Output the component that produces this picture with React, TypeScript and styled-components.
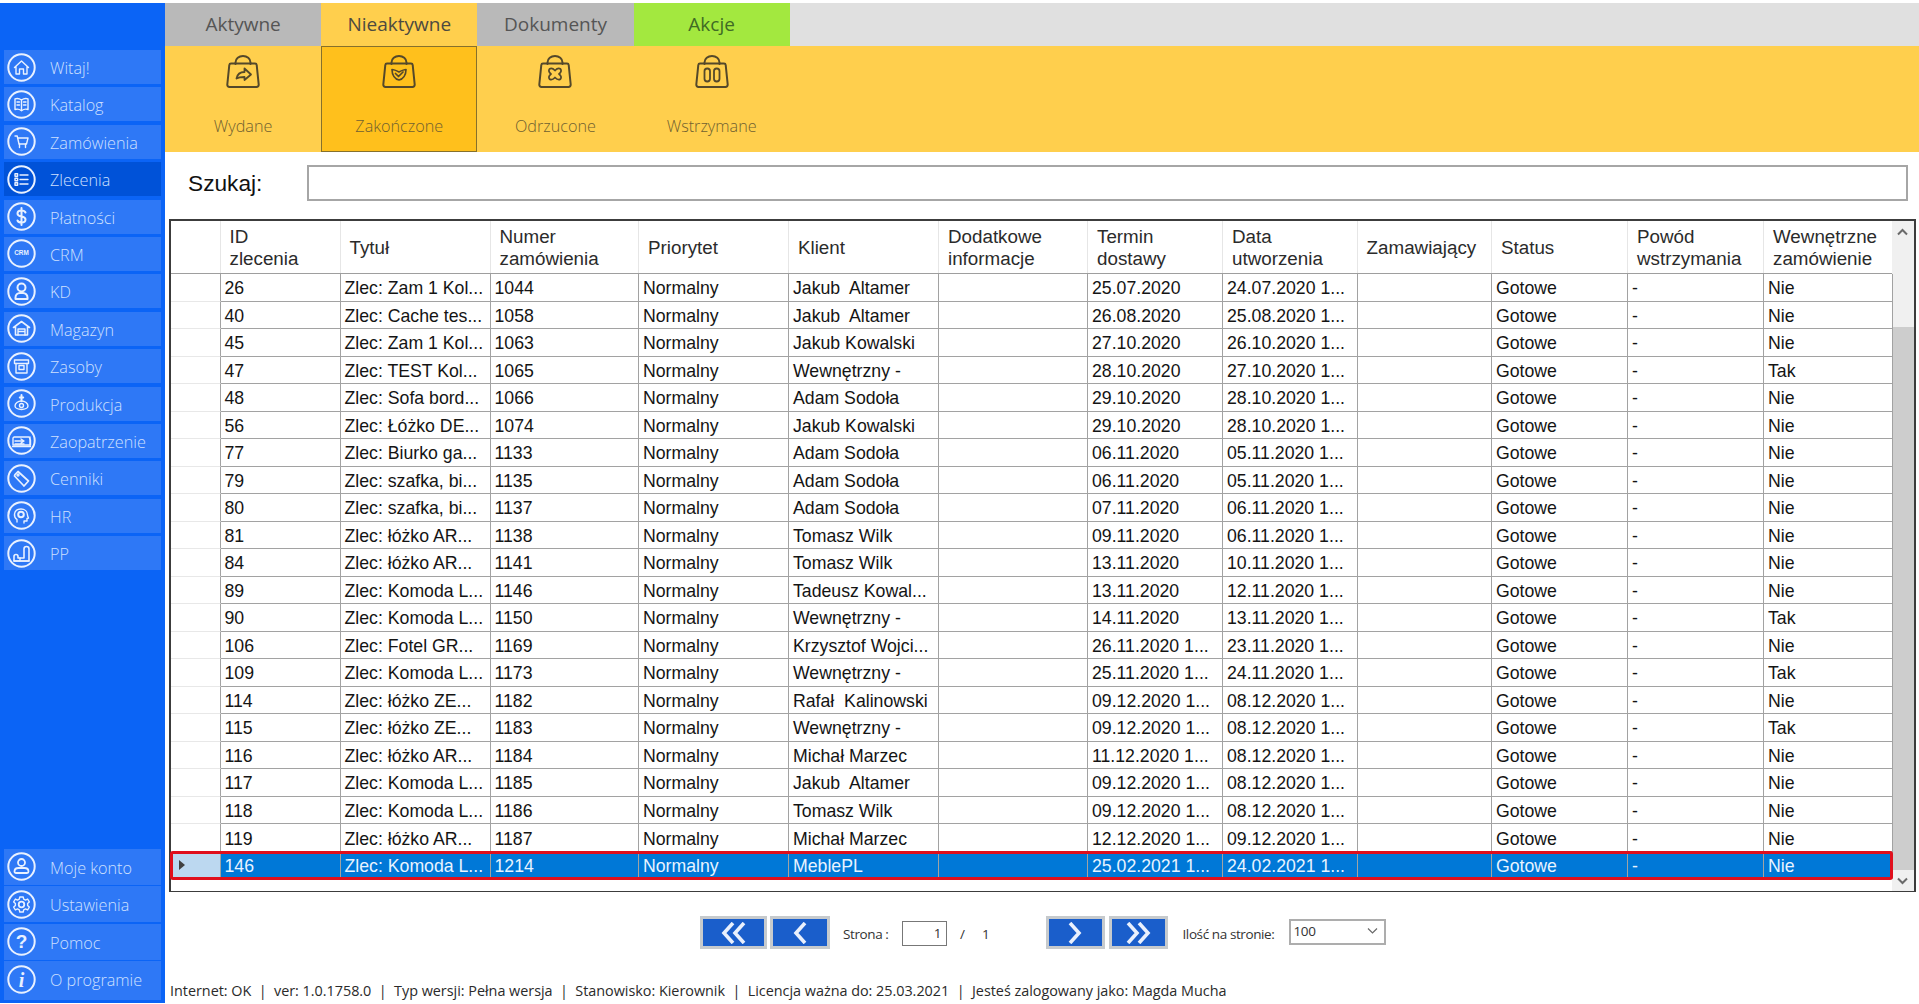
import React from "react";
import styled, { createGlobalStyle } from "styled-components";

const Global = createGlobalStyle`
  html, body { margin: 0; padding: 0; background: #fff; overflow: hidden; }
  * { box-sizing: border-box; }
`;

const UI = `"Open Sans", "Noto Sans", sans-serif`;
const ARIAL = `"Liberation Sans", Arial, sans-serif`;

const Page = styled.div`
  display: flex;
  width: 1919px;
  height: 1004px;
  padding-top: 3px;
  padding-bottom: 1px;
  background: #fff;
`;

const Sidebar = styled.aside`
  flex: 0 0 165px;
  display: flex;
  flex-direction: column;
  justify-content: space-between;
  padding: 47px 4px 3px;
  background: #0b64f6;
`;

const NavGroup = styled.nav<{ $gap: number }>`
  display: flex;
  flex-direction: column;
  gap: ${(p) => p.$gap}px;
`;

const NavItem = styled.div<{ $active?: boolean; $h: number; $tail?: number }>`
  display: flex;
  align-items: center;
  height: ${(p) => p.$h + (p.$tail ?? 0)}px;
  padding-left: 2.5px;
  padding-bottom: ${(p) => p.$tail ?? 0}px;
  gap: 14.5px;
  background: ${(p) => (p.$active ? "#0052d8" : "#2e78f6")};
  color: #cfe0ff;
  font-family: ${UI};
  font-weight: 300;
  font-size: 16.2px;
  white-space: nowrap;
`;

const NavLabel = styled.span`
  margin-top: 2px;
`;

const NavSvg = styled.svg`
  flex: 0 0 29px;
  width: 29px;
  height: 29px;
  fill: none;
  stroke: #e9f1ff;
  stroke-width: 1.4;
  stroke-linecap: round;
  stroke-linejoin: round;
`;

const Ring = styled.circle.attrs({ cx: 14.5, cy: 14.5, r: 13.2 })`
  stroke-width: 2;
`;

const navIcons: Record<string, React.ReactNode> = {
  home: <path d="M7.5 14.5 14.5 8l7 6.5M9 13.5V21h3.5v-5h4v5H20v-7.5" />,
  book: <><path d="M14.5 10c-2-1.5-4.5-1.8-6.5-1.2v10.7c2-.6 4.5-.3 6.5 1.2 2-1.5 4.5-1.8 6.5-1.2V8.8c-2-.6-4.5-.3-6.5 1.2zM14.5 10v10.7" /><path d="M10 12h2.5M10 15h2.5M16.5 12H19M16.5 15H19" /></>,
  cart: <><path d="M8 9h2.2l1.8 8h7.5l1.5-6H10.8" /><path d="M12.5 17v3.5M18.5 17v3.5" /></>,
  list: <><path d="M13 10h8M13 14.5h8M13 19h8" /><rect x="8" y="8.7" width="2.6" height="2.6" /><rect x="8" y="13.2" width="2.6" height="2.6" /><rect x="8" y="17.7" width="2.6" height="2.6" /></>,
  dollar: <path d="M18.5 10.5c-.6-1.4-2.2-2-4-2-2.2 0-4 1-4 3s1.8 2.6 4 3 4 1 4 3-1.8 3-4 3c-1.8 0-3.4-.6-4-2M14.5 6v17" strokeWidth="2" />,
  crm: <text x="14.5" y="16.4" textAnchor="middle" fontFamily={ARIAL} fontSize="6.4" fontWeight="700" fill="#e9f1ff" stroke="none">CRM</text>,
  person: <><circle cx="14.5" cy="10.5" r="4" strokeWidth="2" /><path d="M8.5 22v-1.5a4.5 4.5 0 0 1 4.5-4.5h3a4.5 4.5 0 0 1 4.5 4.5V22z" strokeWidth="2" /></>,
  warehouse: <><path d="M6.5 13.5 14.5 7.5l8 6M8.5 12.5V21h12v-8.5" strokeWidth="1.6" /><path d="M11 21v-6h7v6M11 17.5h7" /></>,
  box: <><rect x="7.5" y="8" width="14" height="3.5" /><path d="M9 11.5V21h11v-9.5" /><rect x="12" y="13.5" width="5" height="4" /></>,
  production: <><path d="M14.5 6v6M12.8 8.5h3.4" strokeWidth="2" /><path d="M8 17a6.5 5 0 0 1 13 0c0 2-3 3.5-6.5 3.5S8 19 8 17z" /><circle cx="14.5" cy="16.5" r="2" /></>,
  truck: <><path d="M7 11h15l1.5 3v5H6V12z" /><path d="M8 15h9M8 18h9M14 13l3 2-3 2M23 11v8" /><path d="M5.5 20.5h18" /></>,
  tag: <><path d="M8 10.5 11 7.5l10.5 9.5-4.5 5L7.5 12z" strokeWidth="1.7" /><circle cx="11" cy="11" r="1" /></>,
  head: <><path d="M10 21v-2.5c-1.8-1.3-2.8-3-2.5-5.5.4-3 3-5 6.5-5 3.8 0 6.5 2.5 6.5 6 0 1 .5 2 1 3l-1.5.5V20h-3v2" /><circle cx="14" cy="13.5" r="2.8" strokeWidth="2" /></>,
  chair: <><path d="M7 22v-4.5c0-1 .7-2 2-2s2 1 2 2V19h6V10c0-1.4 1-2.5 2.5-2.5S22 8.6 22 10v12z" strokeWidth="1.6" /><path d="M7 22h15M13 19v3" /></>,
  account: <><circle cx="14.5" cy="10.5" r="3.5" strokeWidth="1.8" /><path d="M7.5 19.500c0-2.200 1.800-3.500 4-3.500h6c2.200 0 4 1.300 4 3.500v0c0 .8-.7 1.500-1.500 1.500H9c-.8 0-1.500-.7-1.500-1.500z" strokeWidth="1.8" /></>,
  gear: <><path d="M12.8 7h3.4l.5 2.2 1.900.9 2-1.100 1.700 2.900-1.700 1.500v2.200l1.700 1.500-1.700 2.900-2-1.100-1.900.9-.5 2.200h-3.400l-.5-2.200-1.900-.9-2 1.100-1.700-2.900 1.700-1.500v-2.200L6.700 11.900 8.400 9l2 1.100 1.900-.9z" /><circle cx="14.5" cy="14.5" r="2.8" strokeWidth="1.8" /></>,
  help: <text x="14.5" y="21" textAnchor="middle" fontFamily={ARIAL} fontSize="19" fontWeight="700" fill="#e9f1ff" stroke="none">?</text>,
  info: <text x="14.5" y="21.5" textAnchor="middle" fontFamily={`"Liberation Serif", serif`} fontSize="20" fontWeight="700" fontStyle="italic" fill="#e9f1ff" stroke="none">i</text>,
};

const NavIcon = ({ name }: { name: string }) => (
  <NavSvg viewBox="0 0 29 29">
    <Ring />
    {navIcons[name]}
  </NavSvg>
);

const mainNav = [
  ["Witaj!", "home"], ["Katalog", "book"], ["Zamówienia", "cart"], ["Zlecenia", "list"],
  ["Płatności", "dollar"], ["CRM", "crm"], ["KD", "person"], ["Magazyn", "warehouse"],
  ["Zasoby", "box"], ["Produkcja", "production"], ["Zaopatrzenie", "truck"], ["Cenniki", "tag"],
  ["HR", "head"], ["PP", "chair"],
];
const bottomNav = [
  ["Moje konto", "account"], ["Ustawienia", "gear"], ["Pomoc", "help"], ["O programie", "info"],
];

const Main = styled.main`
  flex: 1;
  min-width: 0;
  display: flex;
  flex-direction: column;
`;

const TabBar = styled.div`
  display: flex;
  height: 43px;
  background: #e0e0e0;
`;

const Tab = styled.div<{ $bg: string; $fg: string }>`
  flex: 0 0 156.2px;
  display: flex;
  align-items: center;
  justify-content: center;
  padding-bottom: 2px;
  background: ${(p) => p.$bg};
  color: ${(p) => p.$fg};
  font-family: ${UI};
  font-size: 19px;
`;

const Toolbar = styled.div`
  display: flex;
  height: 106px;
  background: #ffcf4d;
`;

const ToolButton = styled.div<{ $active?: boolean }>`
  flex: 0 0 156.2px;
  display: flex;
  flex-direction: column;
  align-items: center;
  padding-top: 9px;
  background: ${(p) => (p.$active ? "#ffc01c" : "transparent")};
  outline: ${(p) => (p.$active ? "1.5px solid #86702c" : "none")};
  outline-offset: -1px;
  color: #6f5f30;
  font-family: ${UI};
  font-weight: 300;
  font-size: 16.2px;
`;

const ToolLabel = styled.span`
  margin-top: 26px;
`;

const BagSvg = styled.svg`
  width: 36px;
  height: 34px;
  fill: none;
  stroke: #54482a;
  stroke-width: 2;
  stroke-linecap: round;
  stroke-linejoin: round;
`;

const Bag = ({ children }: { children: React.ReactNode }) => (
  <BagSvg viewBox="0 0 36 34">
    <path d="M10.5 9V7.5C10.5 3.5 14 1 18 1s7.5 2.5 7.5 6.5V9" />
    <path d="M6 8.5h24c1 0 1.6.6 1.7 1.5l2 19.5c.1 1.4-.8 2.5-2.2 2.500H4.5c-1.400 0-2.300-1.100-2.200-2.500l2-19.500c.1-.9.700-1.500 1.700-1.500z" />
    {children}
  </BagSvg>
);

const SearchRow = styled.div`
  display: flex;
  align-items: flex-start;
  height: 67px;
  padding: 13px 11px 0 23px;
`;

const SearchLabel = styled.label`
  flex: 0 0 119px;
  margin-top: 1px;
  font-family: ${ARIAL};
  font-size: 22.7px;
  line-height: 34px;
  color: #111;
`;

const SearchBox = styled.div`
  flex: 1;
  height: 35.5px;
  border: 2px solid #a6a6a6;
  background: #fff;
`;

const GridPanel = styled.section`
  display: flex;
  margin-left: 4px;
  width: 1747px;
  height: 673px;
  border: 2px solid #3c3c3c;
  border-bottom-width: 1.5px;
  background: #fff;
`;

const GridBody = styled.div`
  flex: 1;
  min-width: 0;
  font-family: ${ARIAL};
`;

const COLS = "49.5px 120px 150px 148.5px 150px 150px 149px 135px 134.6px 134.4px 136px 136px 129px";

const HeaderRow = styled.div`
  display: grid;
  grid-template-columns: ${COLS};
  height: 53px;
  border-bottom: 1px solid #9e9e9e;
`;

const HeaderCell = styled.div`
  display: flex;
  align-items: center;
  padding: 2px 0 0 9px;
  border-right: 1px solid #e6e6e6;
  color: #2b2b2b;
  font-size: 18.8px;
  line-height: 22.5px;
  white-space: nowrap;
  overflow: hidden;
`;

const DataRow = styled.div<{ $selected?: boolean }>`
  display: grid;
  grid-template-columns: ${COLS};
  height: 27.52px;
  position: relative;
  background: ${(p) => (p.$selected ? "#0078d7" : "#fff")};
  color: ${(p) => (p.$selected ? "#e8f3ff" : "#141414")};
  outline: ${(p) => (p.$selected ? "3px solid #e00f1c" : "none")};
  outline-offset: -2px;
  border-radius: 2px;
`;

const Cell = styled.div<{ $selected?: boolean }>`
  padding: 1.2px 0 0 4px;
  line-height: 27px;
  font-size: 17.7px;
  white-space: pre;
  overflow: hidden;
  border-right: 1px solid #a2a2a2;
  border-bottom: 1px solid ${(p) => (p.$selected ? "transparent" : "#a2a2a2")};
`;

const RowHead = styled.div<{ $selected?: boolean }>`
  display: flex;
  align-items: center;
  padding-left: 8px;
  background: ${(p) => (p.$selected ? "#bcd8f0" : "#fff")};
  border-right: 1px solid #a2a2a2;
  border-bottom: 1px solid ${(p) => (p.$selected ? "transparent" : "#e8e8e8")};
`;

const Marker = styled.span`
  width: 0;
  height: 0;
  border-left: 6px solid #404040;
  border-top: 5.5px solid transparent;
  border-bottom: 5.5px solid transparent;
`;

const Scrollbar = styled.div`
  flex: 0 0 22.5px;
  display: flex;
  flex-direction: column;
  background: #f0f0f0;
`;

const ScrollArrow = styled.div`
  flex: 0 0 21px;
  display: flex;
  align-items: center;
  justify-content: center;
  background: #f0f0f0;
`;

const ArrowSvg = styled.svg<{ $thin?: boolean }>`
  width: 11px;
  height: 8px;
  margin-top: ${(p) => (p.$thin ? "6px" : "0")};
  fill: none;
  stroke: #6a6a6a;
  stroke-width: ${(p) => (p.$thin ? 1.2 : 2)};
`;

const ScrollGap = styled.div`
  flex: 0 0 85px;
`;

const ScrollThumb = styled.div`
  flex: 1;
  background: #cdcdcd;
`;

const Pager = styled.div`
  display: flex;
  align-items: center;
  height: 33px;
  margin-top: 24px;
  padding-left: 535px;
  font-family: ${UI};
  font-size: 13.5px;
  letter-spacing: -0.4px;
  color: #333;
`;

const PageButton = styled.div<{ $w: number; $ml: number }>`
  flex: 0 0 ${(p) => p.$w}px;
  height: 33px;
  margin-left: ${(p) => p.$ml}px;
  display: flex;
  align-items: center;
  justify-content: center;
  background: #1a5ecb;
  border: 3px solid #c6cacd;
`;

const ChevronSvg = styled.svg`
  height: 22px;
  fill: none;
  stroke: #e9f0fd;
  stroke-width: 3.6;
`;

const PagerText = styled.span<{ $w: number; $ml: number }>`
  flex: 0 0 ${(p) => p.$w}px;
  margin: 2px 0 0 ${(p) => p.$ml}px;
  white-space: nowrap;
`;

const PageInput = styled.div`
  flex: 0 0 45.5px;
  height: 25px;
  margin: 1px 0 0 12.5px;
  padding-right: 5px;
  border: 1px solid #777;
  background: #fff;
  text-align: right;
  line-height: 23px;
`;

const PerPage = styled.div`
  flex: 0 0 97px;
  display: flex;
  align-items: flex-start;
  justify-content: space-between;
  height: 26px;
  margin: -2px 0 0 14px;
  padding: 0 6px 0 3px;
  border: 2px solid #adadad;
  background: #fff;
  line-height: 20px;
`;

const StatusBar = styled.div`
  margin-top: 32px;
  padding-left: 5px;
  font-family: ${UI};
  font-size: 14.4px;
  letter-spacing: -0.02px;
  color: #2a2a2a;
  white-space: pre;
`;

const Multi = styled.span`
  white-space: pre-line;
`;

const columns = [
  "", "ID\nzlecenia", "Tytuł", "Numer\nzamówienia", "Priorytet", "Klient", "Dodatkowe\ninformacje",
  "Termin\ndostawy", "Data\nutworzenia", "Zamawiający", "Status", "Powód\nwstrzymania", "Wewnętrzne\nzamówienie",
];

const rows: [string, string, string, string, string, string, string][] = [
  ["26", "Zlec: Zam 1 Kol...", "1044", "Jakub  Altamer", "25.07.2020", "24.07.2020 1...", "Nie"],
  ["40", "Zlec: Cache tes...", "1058", "Jakub  Altamer", "26.08.2020", "25.08.2020 1...", "Nie"],
  ["45", "Zlec: Zam 1 Kol...", "1063", "Jakub Kowalski", "27.10.2020", "26.10.2020 1...", "Nie"],
  ["47", "Zlec: TEST Kol...", "1065", "Wewnętrzny -", "28.10.2020", "27.10.2020 1...", "Tak"],
  ["48", "Zlec: Sofa bord...", "1066", "Adam Sodoła", "29.10.2020", "28.10.2020 1...", "Nie"],
  ["56", "Zlec: Łóżko DE...", "1074", "Jakub Kowalski", "29.10.2020", "28.10.2020 1...", "Nie"],
  ["77", "Zlec: Biurko ga...", "1133", "Adam Sodoła", "06.11.2020", "05.11.2020 1...", "Nie"],
  ["79", "Zlec: szafka, bi...", "1135", "Adam Sodoła", "06.11.2020", "05.11.2020 1...", "Nie"],
  ["80", "Zlec: szafka, bi...", "1137", "Adam Sodoła", "07.11.2020", "06.11.2020 1...", "Nie"],
  ["81", "Zlec: łóżko AR...", "1138", "Tomasz Wilk", "09.11.2020", "06.11.2020 1...", "Nie"],
  ["84", "Zlec: łóżko AR...", "1141", "Tomasz Wilk", "13.11.2020", "10.11.2020 1...", "Nie"],
  ["89", "Zlec: Komoda L...", "1146", "Tadeusz Kowal...", "13.11.2020", "12.11.2020 1...", "Nie"],
  ["90", "Zlec: Komoda L...", "1150", "Wewnętrzny -", "14.11.2020", "13.11.2020 1...", "Tak"],
  ["106", "Zlec: Fotel GR...", "1169", "Krzysztof Wojci...", "26.11.2020 1...", "23.11.2020 1...", "Nie"],
  ["109", "Zlec: Komoda L...", "1173", "Wewnętrzny -", "25.11.2020 1...", "24.11.2020 1...", "Tak"],
  ["114", "Zlec: łóżko ZE...", "1182", "Rafał  Kalinowski", "09.12.2020 1...", "08.12.2020 1...", "Nie"],
  ["115", "Zlec: łóżko ZE...", "1183", "Wewnętrzny -", "09.12.2020 1...", "08.12.2020 1...", "Tak"],
  ["116", "Zlec: łóżko AR...", "1184", "Michał Marzec", "11.12.2020 1...", "08.12.2020 1...", "Nie"],
  ["117", "Zlec: Komoda L...", "1185", "Jakub  Altamer", "09.12.2020 1...", "08.12.2020 1...", "Nie"],
  ["118", "Zlec: Komoda L...", "1186", "Tomasz Wilk", "09.12.2020 1...", "08.12.2020 1...", "Nie"],
  ["119", "Zlec: łóżko AR...", "1187", "Michał Marzec", "12.12.2020 1...", "09.12.2020 1...", "Nie"],
  ["146", "Zlec: Komoda L...", "1214", "MeblePL", "25.02.2021 1...", "24.02.2021 1...", "Nie"],
];

export default function App() {
  return (
    <Page>
      <Global />
      <Sidebar>
        <NavGroup $gap={3.4}>
          {mainNav.map(([label, icon]) => (
            <NavItem key={label} $h={34} $active={label === "Zlecenia"}>
              <NavIcon name={icon} />
              <NavLabel>{label}</NavLabel>
            </NavItem>
          ))}
        </NavGroup>
        <NavGroup $gap={1.8}>
          {bottomNav.map(([label, icon], i) => (
            <NavItem key={label} $h={35.7} $tail={i === 3 ? 3 : 0}>
              <NavIcon name={icon} />
              <NavLabel>{label}</NavLabel>
            </NavItem>
          ))}
        </NavGroup>
      </Sidebar>
      <Main>
        <TabBar>
          <Tab $bg="#b9b9b9" $fg="#555">Aktywne</Tab>
          <Tab $bg="#ffcf4d" $fg="#4d4a40">Nieaktywne</Tab>
          <Tab $bg="#b9b9b9" $fg="#555">Dokumenty</Tab>
          <Tab $bg="#a3e83f" $fg="#3f6b25">Akcje</Tab>
        </TabBar>
        <Toolbar>
          <ToolButton>
            <Bag><path d="M11.5 23.5c.8-4 3.8-6.5 8-6.5v-3.5l6.5 6-6.5 5.5V22c-3 0-5.5 0-8 1.500z" strokeWidth="1.8" /></Bag>
            <ToolLabel>Wydane</ToolLabel>
          </ToolButton>
          <ToolButton $active>
            <Bag><path d="M11 14.5c2 0 4.5 1.2 7 2.5 2.5-1.3 5-2.5 7-2.5 0 5.5-3 9.5-7 10.5-4-1-7-5-7-10.5z" strokeWidth="1.7" /><path d="m14.5 18.5 3 3 4.5-4.5" strokeWidth="1.7" /></Bag>
            <ToolLabel>Zakończone</ToolLabel>
          </ToolButton>
          <ToolButton>
            <Bag><path d="M12.5 14c1.5-1.2 3.5-.6 5.5 1.5 2-2.1 4-2.7 5.5-1.5 1.2 1.5.5 3.5-1.5 5 2 1.5 2.7 3.5 1.5 5-1.5 1.2-3.5.6-5.500-1.500-2 2.100-4 2.700-5.500 1.500-1.200-1.500-.5-3.500 1.500-5-2-1.500-2.700-3.500-1.500-5z" strokeWidth="1.8" /></Bag>
            <ToolLabel>Odrzucone</ToolLabel>
          </ToolButton>
          <ToolButton>
            <Bag><rect x="10.5" y="13.5" width="5.5" height="13" rx="2.7" strokeWidth="1.8" /><rect x="20" y="13.5" width="5.5" height="13" rx="2.7" strokeWidth="1.8" /></Bag>
            <ToolLabel>Wstrzymane</ToolLabel>
          </ToolButton>
        </Toolbar>
        <SearchRow>
          <SearchLabel>Szukaj:</SearchLabel>
          <SearchBox />
        </SearchRow>
        <GridPanel>
          <GridBody>
            <HeaderRow>
              {columns.map((c, i) => (
                <HeaderCell key={i}>
                  <Multi>{c}</Multi>
                </HeaderCell>
              ))}
            </HeaderRow>
            {rows.map((r) => {
              const sel = r[0] === "146";
              const cells = [r[0], r[1], r[2], "Normalny", r[3], "", r[4], r[5], "", "Gotowe", "-", r[6]];
              return (
                <DataRow key={r[0]} $selected={sel}>
                  <RowHead $selected={sel}>{sel && <Marker />}</RowHead>
                  {cells.map((c, i) => (
                    <Cell key={i} $selected={sel}>{c}</Cell>
                  ))}
                </DataRow>
              );
            })}
          </GridBody>
          <Scrollbar>
            <ScrollArrow>
              <ArrowSvg viewBox="0 0 11 8"><path d="m1 6.5 4.5-4.5L10 6.5" /></ArrowSvg>
            </ScrollArrow>
            <ScrollGap />
            <ScrollThumb />
            <ScrollArrow>
              <ArrowSvg viewBox="0 0 11 8"><path d="m1 1.5 4.5 4.5L10 1.5" /></ArrowSvg>
            </ScrollArrow>
          </Scrollbar>
        </GridPanel>
        <Pager>
          <PageButton $w={67} $ml={0}>
            <ChevronSvg viewBox="0 0 28 22" width="28"><path d="M13 1 4 11l9 10M24 1l-9 10 9 10" /></ChevronSvg>
          </PageButton>
          <PageButton $w={60} $ml={3}>
            <ChevronSvg viewBox="0 0 14 22" width="14"><path d="M12 1 3 11l9 10" /></ChevronSvg>
          </PageButton>
          <PagerText $w={46} $ml={13}>Strona :</PagerText>
          <PageInput>1</PageInput>
          <PagerText $w={10} $ml={13}>/</PagerText>
          <PagerText $w={63.5} $ml={12}>1</PagerText>
          <PageButton $w={59} $ml={0}>
            <ChevronSvg viewBox="0 0 14 22" width="14"><path d="m2 1 9 10-9 10" /></ChevronSvg>
          </PageButton>
          <PageButton $w={59} $ml={4}>
            <ChevronSvg viewBox="0 0 28 22" width="28"><path d="m4 1 9 10-9 10M15 1l9 10-9 10" /></ChevronSvg>
          </PageButton>
          <PagerText $w={92} $ml={15}>Ilość na stronie:</PagerText>
          <PerPage>
            100
            <ArrowSvg $thin viewBox="0 0 11 8"><path d="m1 1.5 4.5 4.5L10 1.5" /></ArrowSvg>
          </PerPage>
        </Pager>
        <StatusBar>Internet: OK  |  ver: 1.0.1758.0  |  Typ wersji: Pełna wersja  |  Stanowisko: Kierownik  |  Licencja ważna do: 25.03.2021  |  Jesteś zalogowany jako: Magda Mucha</StatusBar>
      </Main>
    </Page>
  );
}
